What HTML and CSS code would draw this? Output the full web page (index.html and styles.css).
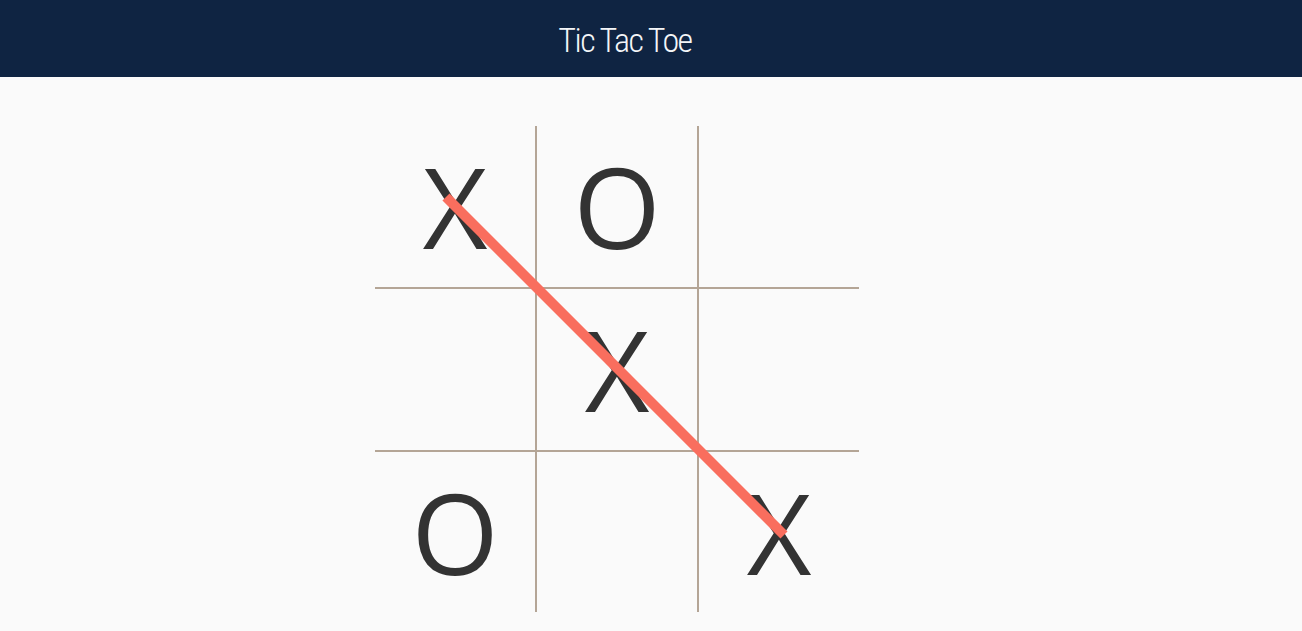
FILE: index.html
```html
<!DOCTYPE html>
<html lang="en">
<head>
<meta charset="utf-8">
<title>Tic Tac Toe</title>
<link rel="stylesheet" href="styles.css">
</head>
<body>
<header class="topbar">
  <h1 class="title">Tic Tac Toe</h1>
</header>
<main class="main">
  <div class="board">
    <div class="cell">X</div>
    <div class="cell">O</div>
    <div class="cell"></div>
    <div class="cell"></div>
    <div class="cell">X</div>
    <div class="cell"></div>
    <div class="cell">O</div>
    <div class="cell"></div>
    <div class="cell">X</div>
    <div class="strike"></div>
  </div>
</main>
</body>
</html>
```
FILE: styles.css
```css
html, body {
  margin: 0;
  padding: 0;
  background: #fafafa;
  height: 100%;
  overflow: hidden;
}
body {
  font-family: "Open Sans", "Noto Sans", sans-serif;
  color: #333333;
}
.topbar {
  height: 77px;
  background: #0f2442;
  display: flex;
  align-items: center;
  justify-content: center;
  padding-right: 52px;
  box-sizing: border-box;
}
.title {
  margin: 0;
  font-family: "Liberation Sans Narrow", "Roboto Condensed", "Roboto", sans-serif;
  font-weight: 300;
  font-size: 34px;
  color: #f4f6f8;
  letter-spacing: -1.5px;
  padding-top: 2px;
}
.main {
  padding: 49px 0 0 375px;
}
.board {
  position: relative;
  display: grid;
  grid-template-columns: repeat(3, 160px);
  grid-template-rows: 161px 161px 160px;
  gap: 2px;
  width: 484px;
  background: #b4a596;
}
.cell {
  background: #fafafa;
  font-size: 112px;
  line-height: 160px;
  text-align: center;
  color: #333333;
}
.strike {
  position: absolute;
  left: 1px;
  top: 235px;
  width: 478px;
  height: 10px;
  background: #f96e5e;
  transform: rotate(45deg);
}
```
